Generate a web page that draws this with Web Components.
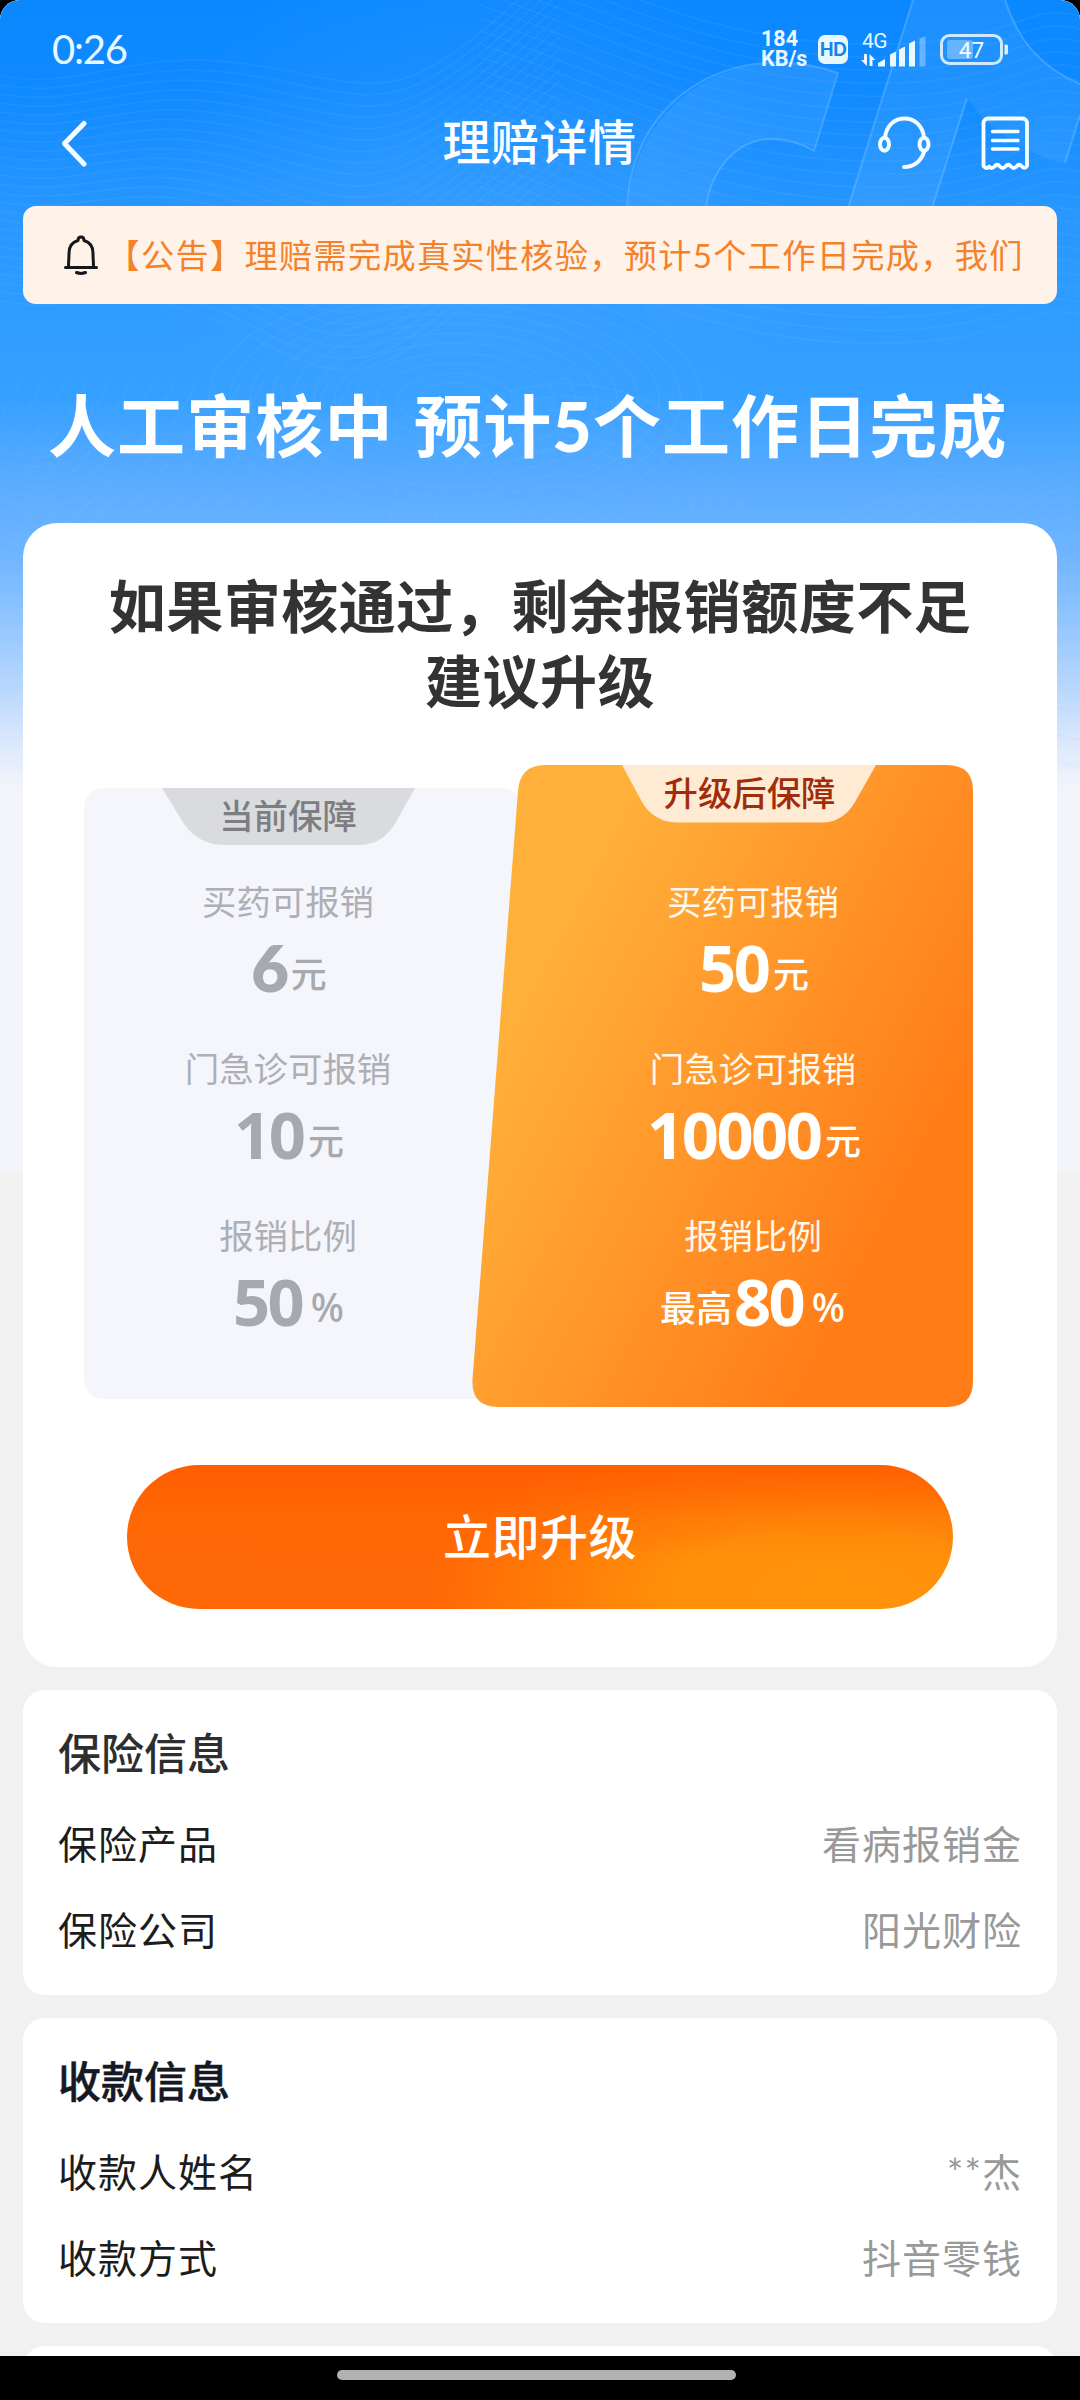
<!DOCTYPE html>
<html lang="zh-CN">
<head>
<meta charset="utf-8">
<title>理赔详情</title>
<style>
  html, body { margin: 0; padding: 0; background: #000; }
  body { width: 1080px; height: 2400px; overflow: hidden; font-family: Lato, "Noto Sans CJK SC", sans-serif; color: #1c1c1c; }
</style>
</head>
<body>
<claim-page>
  <status-bar slot="top"></status-bar>
  <nav-bar slot="top">理赔详情</nav-bar>
  <notice-bar slot="top">【公告】理赔需完成真实性核验，预计5个工作日完成，我们</notice-bar>
  <claim-status slot="top"><span>人工审核中 预计<b>5</b>个工作日完成</span></claim-status>
  <upgrade-card>
    <span slot="l1">如果审核通过，剩余报销额度不足</span>
    <span slot="l2">建议升级</span>
    <plan-panel kind="current" slot="plans">
      <span slot="tab">当前保障</span>
      <plan-item label="买药可报销" num="6" unit="元" style="--digits:Lato;--dw:800"></plan-item>
      <plan-item label="门急诊可报销" num="10" unit="元"></plan-item>
      <plan-item label="报销比例" num="50" unit="%"></plan-item>
    </plan-panel>
    <plan-panel kind="upgraded" slot="plans">
      <span slot="tab">升级后保障</span>
      <plan-item label="买药可报销" num="50" unit="元"></plan-item>
      <plan-item label="门急诊可报销" num="10000" unit="元"></plan-item>
      <plan-item label="报销比例" pre="最高" num="80" unit="%"></plan-item>
    </plan-panel>
    <cta-button slot="action">立即升级</cta-button>
  </upgrade-card>
  <info-card heading="保险信息" style="--title:#2e2e2e;--ts:0">
    <info-row label="保险产品">看病报销金</info-row>
    <info-row label="保险公司">阳光财险</info-row>
  </info-card>
  <info-card heading="收款信息" style="--title:#161823;--ts:.5px">
    <info-row label="收款人姓名">**杰</info-row>
    <info-row label="收款方式">抖音零钱</info-row>
  </info-card>
  <info-card></info-card>
</claim-page>
<script>
const define = (name, render) => customElements.define(name, class extends HTMLElement {
  constructor() { super(); this.attachShadow({ mode: 'open' }); }
  connectedCallback() { this.shadowRoot.innerHTML = render(this); }
});

/* Faint contour lines over the header */
function contours() {
  let s = '';
  for (let i = 0; i < 26; i++) {
    const y = 70 + i * 9;
    s += `<path d="M0 ${y + 6} C90 ${y + 22} 130 ${y - 26} 260 ${y - 4 + i * 2} S400 ${y + 46} 560 ${y - 110 + i * 2}"/>`;
  }
  for (let i = 0; i < 24; i++) {
    const y = -60 + i * 13;
    s += `<path d="M480 ${y} C600 ${y + 40} 700 ${y + 100} 860 ${y + 104} S1020 ${y + 60} 1080 ${y + 76}"/>`;
  }
  for (let i = 0; i < 11; i++) {
    const r = 26 + i * 15;
    s += `<ellipse cx="565" cy="535" rx="${r}" ry="${r * 0.86}"/>`;
    s += `<ellipse cx="455" cy="400" rx="${r * 1.4}" ry="${r * 0.66}"/>`;
  }
  for (let i = 0; i < 18; i++) {
    const x = i * 22;
    s += `<path d="M${x - 160} 560 Q${x - 60} 500 ${x} 380"/><path d="M${x + 740} 590 Q${x + 820} 520 ${x + 930} 480"/>`;
  }
  for (let i = 0; i < 12; i++) s += `<path d="M0 ${450 + i * 10} Q60 ${470 + i * 10} 110 ${430 + i * 10}"/><path d="M900 ${470 + i * 24} Q1000 ${480 + i * 24} 1080 ${460 + i * 28}"/>`;
  return s;
}

define('header-art', () => `
<style>:host{display:block;height:1172px;background:#f4f5fa} svg{display:block}</style>
<svg width="1080" height="790" viewBox="0 0 1080 790">
  <defs>
    <linearGradient id="sky" x1="0" y1="0" x2="0" y2="1">
      <stop offset="0" stop-color="#0c88ff"/><stop offset=".11" stop-color="#0f8aff"/>
      <stop offset=".27" stop-color="#2897ff"/><stop offset=".42" stop-color="#309dff"/>
      <stop offset=".5" stop-color="#35a0ff"/><stop offset=".6" stop-color="#57abff"/>
      <stop offset=".7" stop-color="#6eb5ff"/><stop offset=".78" stop-color="#8fc4ff"/>
      <stop offset=".87" stop-color="#b8d7fd"/><stop offset=".94" stop-color="#dbe8fc"/>
      <stop offset="1" stop-color="#f4f5fa"/>
    </linearGradient>
    <radialGradient id="glow" gradientUnits="userSpaceOnUse" cx="470" cy="260" r="330">
      <stop offset="0" stop-color="#4aa8ff" stop-opacity=".4"/><stop offset="1" stop-color="#4aa8ff" stop-opacity="0"/>
    </radialGradient>
    <linearGradient id="ring" gradientUnits="userSpaceOnUse" x1="640" y1="60" x2="700" y2="370">
      <stop offset="0" stop-color="#66b5ff" stop-opacity=".26"/><stop offset=".5" stop-color="#66b5ff" stop-opacity=".14"/><stop offset="1" stop-color="#66b5ff" stop-opacity="0"/>
    </linearGradient>
  </defs>
  <rect width="1080" height="790" fill="url(#sky)"/>
  <rect width="1080" height="600" fill="url(#glow)"/>
  <g fill="none" stroke="#8fc8ff" stroke-opacity=".1" stroke-width="1.6">${contours()}</g>
  <path d="M838 73 C740 38 626 95 627 230 C627 330 690 370 770 370 C830 370 870 345 890 315 L835 265 C780 315 705 295 706 210 C712 156 758 118 814 151Z" fill="url(#ring)"/>
  <path d="M627 208 C632 88 745 39 838 73 L814 151 C758 118 712 156 706 208" fill="none" stroke="#7fc0ff" stroke-opacity=".38" stroke-width="2"/>
  <path d="M913 0 L848 208 L932 208 L967 98 C990 132 1030 156 1065 163 L1080 115 L1080 84 C1040 67 1018 40 1005 0Z" fill="#5fb2ff" fill-opacity=".2"/>
  <path d="M913 0L848 208M932 208L967 98M1005 0C1018 40 1040 67 1080 84M1065 163L1080 115" fill="none" stroke="#7fc0ff" stroke-opacity=".4" stroke-width="2"/>
</svg>`);

define('claim-page', () => `
<style>
  :host{display:grid;grid-template:2356px 44px / 1080px;height:2400px;overflow:hidden}
  .screen{grid-area:1/1;display:grid;grid-template-columns:1080px;align-content:start;background:#f1f1f1;border-radius:20px 20px 0 0;overflow:hidden;height:2356px}
  header-art{grid-area:1/1;align-self:start}
  .flow{grid-area:1/1;display:flex;flex-direction:column;z-index:1;height:2356px}
  ::slotted(*){flex:none}
  .cards{display:flex;flex-direction:column;flex:none;gap:23px;padding:0 23px}
  .home{grid-area:2/1;display:flex;justify-content:center;padding:14px 7px 0 0}
  .home i{width:399px;height:10px;border-radius:5px;background:#b2b2b2}
</style>
<div class="screen"><header-art></header-art>
  <div class="flow"><slot name="top"></slot><div class="cards"><slot></slot></div></div>
</div>
<div class="home"><i></i></div>`);

define('status-bar', () => `
<style>
  :host{display:flex;align-items:center;justify-content:space-between;height:98px;padding:0 72px 0 52px;box-sizing:border-box;color:#e9f7ff}
  .time{font-size:40px;line-height:44px;letter-spacing:-1.2px}
  .right{display:flex;align-items:center}
  .speed{display:flex;flex-direction:column;font:700 21.5px/20px Roboto,sans-serif;width:48px;margin-right:9px;white-space:nowrap}
  .hd{width:30px;height:29px;border-radius:7px;background:#e9f7ff;color:#1583ee;font:900 18px/29px Lato,sans-serif;text-align:center;letter-spacing:-.5px;margin-right:12px}
  svg{display:block}
</style>
<div class="time">0:26</div>
<div class="right">
  <div class="speed"><span>184</span><span>KB/s</span></div>
  <div class="hd">HD</div>
  <svg width="68" height="52" viewBox="0 -8 68 52" fill="#e9f7ff">
    <text x="2" y="17" font-family="Roboto,sans-serif" font-size="21" letter-spacing="-.5">4G</text>
    <path d="M4 23h3v12l-6-6h3zM9.500 35v-12l6 6h-3v6z"/>
    <path d="M18 35.500v-3.500l7-4v7.500zM30 35.500V23.500l6-3v15zM39 35.500V18.500l6-3v20zM49 35.500V12.500l6-3v26z"/>
    <path d="M59.500 35.500V7.500l6-2v30z" fill-opacity=".35"/>
  </svg>
  <svg style="margin-left:12px" width="68" height="31" viewBox="0 0 68 31">
    <rect x="1.500" y="1.500" width="60" height="28" rx="8" fill="none" stroke="#cdeaff" stroke-width="3"/>
    <rect x="7" y="6" width="26" height="19" rx="3" fill="#fff" fill-opacity=".32"/>
    <path d="M64.500 10.500h2a1.500 1.500 0 0 1 1.500 1.500v7a1.500 1.500 0 0 1-1.500 1.500h-2z" fill="#d8f0ff"/>
    <text x="31.500" y="23.500" text-anchor="middle" font-family="Roboto,sans-serif" font-size="22.5" fill="#f2fbff">47</text>
  </svg>
</div>`);

define('nav-bar', () => `
<style>
  :host{display:grid;grid-template-columns:1fr auto 1fr;align-items:center;height:90px;padding:0 50px 0 60px;box-sizing:border-box;color:#fff}
  h1{margin:0 11px 0 0;font-size:48px;font-weight:500;line-height:60px;letter-spacing:.5px;padding-bottom:3px}
  .act{display:flex;justify-content:flex-end;gap:46px}
  svg{display:block;fill:none;stroke:#f4fdff;stroke-linecap:round;stroke-linejoin:round}
</style>
<svg width="30" height="48" viewBox="0 0 30 48" stroke-width="5"><path d="M24 4.500L4.500 24.500L24 45"/></svg>
<h1><slot></slot></h1>
<div class="act">
  <svg width="56" height="54" viewBox="0 0 56 54" stroke-width="4">
    <path d="M7 22C9 -4 44 -4 46 22"/><ellipse cx="6.500" cy="28.300" rx="4.500" ry="6.500"/><ellipse cx="46" cy="28.300" rx="4.500" ry="6.500"/><path d="M46 36C43 45 36 51 26 51"/>
  </svg>
  <svg width="50" height="54" viewBox="0 0 50 54" stroke-width="3.800">
    <path d="M3.500 50V7a4.500 4.500 0 0 1 4.500-4.500h34.500a4.500 4.500 0 0 1 4.500 4.500v43q-2.500 3.500-5 .500q-2.600-3.500-5.500 0q-2.700 3-5.500 0q-2.700-3.500-5.500 0q-2.800 3-5.600 0q-2.700-3.500-5.400 0q-3 3-5.400 0q-3 3.500-5.100-.500"/>
    <path d="M12.500 15.500h25.500M12.500 24.500h25.500M12.500 33h25.500" stroke-width="3.400"/>
  </svg>
</div>`);

define('notice-bar', () => `
<style>
  :host{display:flex;align-items:center;height:98px;margin:18px 23px 0;padding-left:40px;border-radius:13px;background:#fff2e9;color:#f4822a;box-sizing:border-box}
  svg{flex:none;display:block}
  .t{font-size:33.2px;line-height:48px;letter-spacing:1.3px;white-space:nowrap;margin-left:7.500px;width:922px;overflow:hidden}
</style>
<svg width="36" height="42" viewBox="0 0 36 42" fill="none" stroke="#15171c" stroke-width="3" stroke-linecap="round" stroke-linejoin="round">
  <path d="M2.500 33.500h31M5.500 33c0-5 .5-9 .5-14c0-7 4-11 9-12.500c0-2 1-3.500 3-3.500s3 1.500 3 3.500c5 1.500 9 5.500 9 12.500c0 5 .5 9 .5 14M13.500 38.500q4.500 1.800 9 0"/>
</svg>
<div class="t"><slot></slot></div>`);

define('claim-status', () => `
<style>
  :host{display:flex;align-items:center;height:219px;padding:25px 0 0 48px;box-sizing:border-box;color:#fff;font-size:68px;font-weight:700;line-height:90px;letter-spacing:1.1px;word-spacing:3px;white-space:nowrap}
</style>
<slot></slot>`);

define('upgrade-card', () => `
<style>
  :host{display:flex;flex-direction:column;align-items:center;height:1144px;border-radius:34px;background:#fff;box-sizing:border-box;padding-top:46px}
  h2{margin:0;display:flex;flex-direction:column;align-items:center;color:#333;font-size:57px;font-weight:700;line-height:75px;letter-spacing:.5px}
  .plans{display:grid;grid-template-columns:389px 501px;align-self:flex-start;align-items:start;margin:46px 0 0 60px;height:642px}
  .go{margin-top:58px}
</style>
<h2><slot name="l1"></slot><slot name="l2"></slot></h2>
<div class="plans"><slot name="plans"></slot></div>
<div class="go"><slot name="action"></slot></div>`);

define('plan-panel', el => {
  const up = el.getAttribute('kind') === 'upgraded';
  const art = up
    ? `<svg width="501" height="642" viewBox="0 0 501 642"><defs>
        <linearGradient id="o" gradientUnits="userSpaceOnUse" x1="70" y1="200" x2="460" y2="400">
        <stop offset="0" stop-color="#ffb03a"/><stop offset=".55" stop-color="#ff9328"/><stop offset="1" stop-color="#ff7c17"/></linearGradient></defs>
        <path d="M73 0H475Q501 0 501 26V616Q501 642 475 642H26Q-1 642 .5 614L46 26Q48 0 73 0Z" fill="url(#o)"/>
        <path d="M150 0H404L383 37Q371 57.500 350 57.500H206Q182 57.500 170 37Z" fill="#ffead4"/></svg>`
    : `<svg width="440" height="611" viewBox="0 0 440 611"><path d="M23 0H417Q437 0 437 20L410 611H23Q1 611 1 589V22Q1 0 23 0Z" fill="#f4f6fb"/>
        <path d="M79 0H332L313 34Q300 57 276 57H142Q116 57 101 36Z" fill="#dadbdf"/></svg>`;
  return `
<style>
  :host{display:grid;grid-template-columns:${up ? '501px' : '389px'};margin-top:${up ? 0 : 23}px;
    --label:${up ? '#fff8ec' : '#aeafb4'};--num:${up ? '#fff' : '#a8a9ae'}}
  svg,.body{grid-area:1/1} svg{display:block;overflow:visible}
  .body{display:flex;flex-direction:column;align-items:center;width:${up ? '440px' : '410px'};margin-left:${up ? '61px' : 0}}
  .tab{height:57px;line-height:56px;font-size:34.400px;font-weight:500;color:${up ? '#a12c0b' : '#7d7e81'};${up ? 'margin-right:7px' : ''}}
  .items{display:flex;flex-direction:column;gap:37px;margin-top:${up ? 55 : 32}px}
</style>${art}
<div class="body"><div class="tab"><slot name="tab"></slot></div><div class="items"><slot></slot></div></div>`;
});

define('plan-item', el => {
  const a = n => el.getAttribute(n) || '';
  return `
<style>
  :host{display:flex;flex-direction:column;align-items:center;height:130px}
  .l{font-size:34.400px;line-height:50px;color:var(--label);white-space:nowrap}
  .v{display:flex;align-items:baseline;color:var(--num);line-height:66px;margin-top:7px;font-size:36px;font-weight:500}
  .v span{transform:translateY(-4px)}
  b{font-family:var(--digits,"Noto Sans"),sans-serif;font-size:65px;font-weight:var(--dw,700);letter-spacing:-2.500px;margin:0 4.500px 0 2px}
  .v .pc{font:500 39px/66px "Noto Sans",sans-serif;margin-left:4px;margin-right:1px}
</style>
<div class="l">${a('label')}</div>
<div class="v"><span>${a('pre')}</span><b>${a('num')}</b><span class="${a('unit') === '%' ? 'pc' : ''}">${a('unit')}</span></div>`;
});

define('cta-button', () => `
<style>
  :host{display:flex;align-items:center;justify-content:center;width:826px;height:144px;border-radius:72px;color:#fff;font-size:48px;font-weight:500;letter-spacing:.5px;line-height:60px;
  background:
    linear-gradient(180deg,rgba(255,92,0,.8) 0,rgba(255,100,0,.3) 35%,rgba(255,110,0,0) 65%),
    radial-gradient(ellipse 410px 165px at 710px 128px,#ff940a 0,#ff900a 40%,rgba(255,140,8,0) 100%),
    #ff6806}
</style><slot></slot>`);

define('info-card', el => `
<style>
  :host{display:block;height:305px;flex:none;border-radius:22px;background:#fff;padding:34px 35px 0 35px;box-sizing:border-box}
  h3{margin:0;font-size:43px;line-height:60px;height:60px;font-weight:500;color:var(--title);-webkit-text-stroke:var(--ts,0) var(--title)}
  .rows{display:flex;flex-direction:column;gap:26px;margin-top:30px}
</style>
<h3>${el.getAttribute('heading') || ''}</h3><div class="rows"><slot></slot></div>`);

define('info-row', el => `
<style>
  :host{display:flex;justify-content:space-between;font-size:39px;line-height:60px;letter-spacing:1px}
  .v{color:#999}
</style>
<span>${el.getAttribute('label')}</span><span class="v"><slot></slot></span>`);
</script>
</body>
</html>
